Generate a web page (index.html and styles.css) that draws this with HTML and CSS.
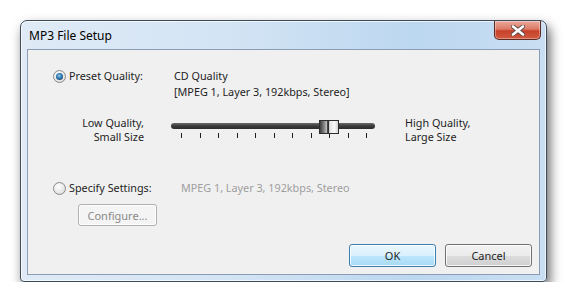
FILE: index.html
```html
<!DOCTYPE html>
<html lang="en">
<head>
    <meta charset="UTF-8">
    <title>MP3 File Setup</title>
    <link rel="stylesheet" href="styles.css">
</head>
<body>
    <div class="window">
        <div class="titlebar">
            <span class="title">MP3 File Setup</span>
            <button class="close-btn" aria-label="Close">
                <svg width="14" height="11" viewBox="0 0 14 11">
                    <path d="M2 1.5 L12 9.5 M12 1.5 L2 9.5" stroke="#5a4a48" stroke-width="4.4" stroke-linecap="round"/>
                    <path d="M2 1.5 L12 9.5 M12 1.5 L2 9.5" stroke="#ffffff" stroke-width="2.6" stroke-linecap="round"/>
                </svg>
            </button>
        </div>

        <div class="client">
            <div class="row preset">
                <div class="option">
                    <span class="radio checked"></span>
                    <span>Preset Quality:</span>
                </div>
                <div class="info">
                    <div>CD Quality</div>
                    <div>[MPEG 1, Layer 3, 192kbps, Stereo]</div>
                </div>
            </div>

            <div class="row quality">
                <div class="side left">Low Quality,<br>Small Size</div>
                <div class="slider">
                    <div class="track"></div>
                    <div class="thumb"></div>
                    <div class="ticks">
                        <i></i><i></i><i></i><i></i><i></i><i></i>
                        <i></i><i></i><i></i><i></i><i></i>
                    </div>
                </div>
                <div class="side right">High Quality,<br>Large Size</div>
            </div>

            <div class="row specify">
                <div class="option wide">
                    <span class="radio"></span>
                    <span>Specify Settings:</span>
                </div>
                <div class="info muted">MPEG 1, Layer 3, 192kbps, Stereo</div>
            </div>

            <button class="btn configure" disabled>Configure...</button>

            <div class="actions">
                <button class="btn primary">OK</button>
                <button class="btn">Cancel</button>
            </div>
        </div>
    </div>
</body>
</html>
```

FILE: styles.css
```css
* {
    margin: 0;
    padding: 0;
    box-sizing: border-box;
}

body {
    background: #ffffff;
    font-family: 'Noto Sans', 'Open Sans', sans-serif;
    font-size: 10.8px;
    color: #1e1e1e;
    padding: 20px 0 0 20px;
}

.window {
    width: 527px;
    height: 262px;
    display: flex;
    flex-direction: column;
    padding: 0 6px 6px 6px;
    border: 1px solid #3b4b5c;
    border-radius: 7px 7px 4px 4px;
    background: linear-gradient(to right, #dfeaf6 0%, #d3e4f4 40%, #bcd7f0 75%, #c9def2 100%);
    box-shadow: 3px 6px 12px rgba(0, 0, 0, 0.6), inset 0 0 0 1px rgba(255, 255, 255, 0.7);
}

.titlebar {
    height: 28px;
    display: flex;
    justify-content: space-between;
    align-items: flex-start;
}

.title {
    font-size: 12px;
    padding: 6px 0 0 2px;
    color: #000;
}

.close-btn {
    width: 47px;
    height: 19px;
    margin-right: -1px;
    border: 1px solid #5e2a22;
    border-top: none;
    border-radius: 0 0 5px 5px;
    background: linear-gradient(to bottom, #e9a99b 0%, #dd7a66 45%, #c7412a 55%, #d05a40 100%);
    box-shadow: inset 0 0 0 1px rgba(255, 255, 255, 0.35);
    display: flex;
    align-items: center;
    justify-content: center;
}

.client {
    flex: 1;
    background: #f0f0f0;
    border: 1px solid #8a9db5;
    display: flex;
    flex-direction: column;
    padding: 18px 7px 7px 25px;
}

.row {
    display: flex;
}

.option {
    width: 121px;
    display: flex;
    align-items: center;
    gap: 3px;
    height: 16px;
    line-height: 16px;
}

.option.wide {
    width: 128px;
}

.info {
    line-height: 16px;
}

.muted {
    color: #9e9e9e;
}

.radio {
    width: 13px;
    height: 13px;
    border-radius: 50%;
    border: 1px solid #8a8a8a;
    background: radial-gradient(circle at 40% 35%, #ffffff 0%, #e6e6e6 60%, #cfcfcf 100%);
    display: flex;
    align-items: center;
    justify-content: center;
}

.radio.checked::after {
    content: "";
    width: 7px;
    height: 7px;
    border-radius: 50%;
    background: radial-gradient(circle at 45% 40%, #8ccbed 0%, #2f78ad 45%, #123452 100%);
}

.quality {
    margin-top: 16px;
    line-height: 14px;
}

.side {
    width: 91px;
}

.side.left {
    text-align: right;
}

.slider {
    position: relative;
    width: 204px;
    height: 26px;
    margin: 0 30px 0 27px;
}

.track {
    margin-top: 7px;
    height: 6px;
    border-radius: 3px;
    background: linear-gradient(to bottom, #6a6a6a 0%, #3a3a3a 50%, #2c2c2c 100%);
}

.thumb {
    position: absolute;
    left: 148px;
    top: 4px;
    width: 20px;
    height: 14px;
    border: 1px solid #2e2e2e;
    background: linear-gradient(to right, #3e3e3e 0%, #8c8c8c 25%, #c8c8c8 40%, #2e2e2e 42%, #2e2e2e 50%, #e2e2e2 53%, #fafafa 80%, #d4d4d4 100%);
}

.ticks {
    display: flex;
    justify-content: space-between;
    margin: 4px 8px 0 10px;
}

.ticks i {
    display: block;
    width: 1px;
    height: 5px;
    background: #1e1e1e;
}

.specify {
    margin-top: 36px;
}

.btn {
    font-family: inherit;
    font-size: 11px;
    color: #1e1e1e;
    width: 87px;
    height: 23px;
    border: 1px solid #707070;
    border-radius: 3px;
    background: linear-gradient(to bottom, #f2f2f2 0%, #ebebeb 50%, #dddddd 51%, #cfcfcf 100%);
    box-shadow: inset 0 0 0 1px rgba(255, 255, 255, 0.8);
}

.btn.configure {
    width: 79px;
    height: 22px;
    margin: 8px 0 0 25px;
    color: #8a8a8a;
    border-color: #adb2b5;
    background: #f4f4f4;
}

.btn.primary {
    border-color: #3c7fb1;
    background: linear-gradient(to bottom, #eaf6fd 0%, #d9f0fc 50%, #bee6fd 51%, #a7d9f5 100%);
}

.actions {
    margin-top: auto;
    display: flex;
    justify-content: flex-end;
    gap: 9px;
}
```
